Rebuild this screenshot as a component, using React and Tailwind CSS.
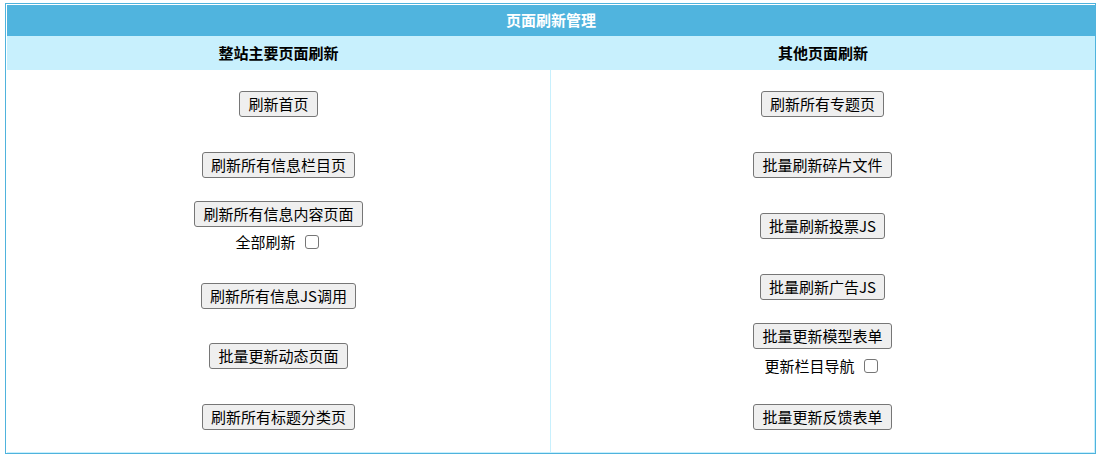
import React from 'react';

const font = { fontFamily: '"Noto Sans CJK SC", "Noto Sans", sans-serif' };

function Btn({ children, className = '' }) {
    return (
        <button
            type="button"
            className={`h-[26px] px-[8px] border border-[#767676] bg-[#efefef] rounded-[3px] text-[15px] leading-[22px] text-black ${className}`}
        >
            {children}
        </button>
    );
}

function Check({ label, className = '' }) {
    return (
        <label className={`flex items-center h-[22px] text-[15px] leading-[22px] text-black ${className}`}>
            <span>{label}</span>
            <input
                type="checkbox"
                className="appearance-none w-[14px] h-[14px] ml-[9px] mr-[3px] border border-[#767676] rounded-[3px] bg-white"
            />
        </label>
    );
}

export default function App() {
    return (
        <div className="pl-[5px] pt-[3px] bg-white" style={font}>
            <div className="w-[1091px] h-[451px] border border-[#4fb3dd] pl-px pt-px flex flex-col">
                <div className="h-[31px] bg-[#50b4de] flex items-center justify-center text-white text-[15px] font-bold">
                    页面刷新管理
                </div>
                <div className="h-[34px] bg-[#c8f0fd] flex text-[15px] font-bold text-black">
                    <div className="w-[543px] flex items-center justify-center">整站主要页面刷新</div>
                    <div className="w-px" />
                    <div className="flex-1 flex items-center justify-center">其他页面刷新</div>
                </div>
                <div className="flex-1 flex border-r border-b border-[#c8f0fd]">
                    <div className="w-[543px] flex flex-col items-center">
                        <Btn className="mt-[21px]">刷新首页</Btn>
                        <Btn className="mt-[35px]">刷新所有信息栏目页</Btn>
                        <Btn className="mt-[23px]">刷新所有信息内容页面</Btn>
                        <Check label="全部刷新" className="mt-[4px]" />
                        <Btn className="mt-[30px]">刷新所有信息JS调用</Btn>
                        <Btn className="mt-[34px]">批量更新动态页面</Btn>
                        <Btn className="mt-[35px]">刷新所有标题分类页</Btn>
                    </div>
                    <div className="w-px bg-[#c8f0fd]" />
                    <div className="flex-1 flex flex-col items-center">
                        <Btn className="mt-[21px]">刷新所有专题页</Btn>
                        <Btn className="mt-[35px]">批量刷新碎片文件</Btn>
                        <Btn className="mt-[35px]">批量刷新投票JS</Btn>
                        <Btn className="mt-[35px]">批量刷新广告JS</Btn>
                        <Btn className="mt-[23px]">批量更新模型表单</Btn>
                        <Check label="更新栏目导航" className="mt-[6px]" />
                        <Btn className="mt-[27px]">批量更新反馈表单</Btn>
                    </div>
                </div>
            </div>
        </div>
    );
}
